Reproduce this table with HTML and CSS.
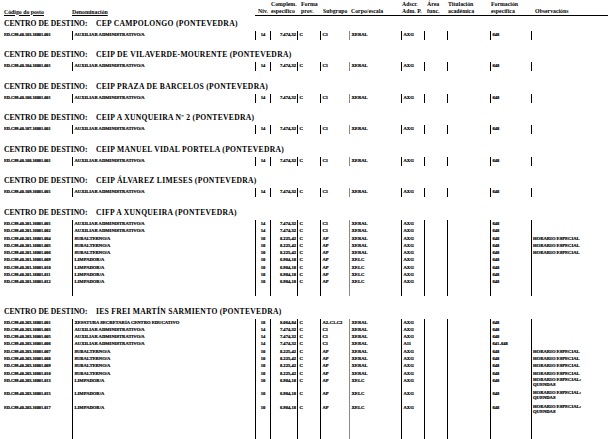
FILE: index.html
```html
<!DOCTYPE html>
<html lang="gl">
<head>
<meta charset="utf-8">
<title>Relación de postos</title>
<link rel="stylesheet" href="styles.css">
</head>
<body>
<div class="page">
  <div class="grid head">
    <div class="h"><span class="u">Código do posto</span></div>
    <div class="h"><span class="u">Denominación</span></div>
    <div class="h ln hc">Niv.</div>
    <div class="h ln p1">Complem.<br>específico</div>
    <div class="h ln p4">Forma<br>prov.</div>
    <div class="h ln p3">Subgrupo</div>
    <div class="h ln p2">Corpo/escala</div>
    <div class="h ln p1">Adscr.<br>Adm. P.</div>
    <div class="h ln p3">Área<br>func.</div>
    <div class="h ln p1">Titulación<br>académica</div>
    <div class="h ln p1">Formación<br>específica</div>
    <div class="h ln p4">Observacións</div>
  </div>

  <section class="sec">
    <div class="title"><span class="lab">CENTRO DE DESTINO:</span><span class="name">CEP CAMPOLONGO (PONTEVEDRA)</span></div>
    <div class="grid row"><div class="c code">ED.C99.40.103.16001.001</div><div class="c den">AUXILIAR ADMINISTRATIVO/A</div><div class="c niv">14</div><div class="c cmp">7.474,32</div><div class="c fp">C</div><div class="c sg">C1</div><div class="c ce">XERAL</div><div class="c ad">AXG</div><div class="c ar"></div><div class="c ti"></div><div class="c fo">648</div><div class="c ob"></div></div>
    <div class="grid row fill f1"><div class="c code"></div><div class="c den"></div><div class="c niv"></div><div class="c cmp"></div><div class="c fp"></div><div class="c sg"></div><div class="c ce"></div><div class="c ad"></div><div class="c ar"></div><div class="c ti"></div><div class="c fo"></div><div class="c ob"></div></div>
  </section>

  <section class="sec">
    <div class="title"><span class="lab">CENTRO DE DESTINO:</span><span class="name">CEIP DE VILAVERDE-MOURENTE (PONTEVEDRA)</span></div>
    <div class="grid row"><div class="c code">ED.C99.40.104.16001.001</div><div class="c den">AUXILIAR ADMINISTRATIVO/A</div><div class="c niv">14</div><div class="c cmp">7.474,32</div><div class="c fp">C</div><div class="c sg">C1</div><div class="c ce">XERAL</div><div class="c ad">AXG</div><div class="c ar"></div><div class="c ti"></div><div class="c fo">648</div><div class="c ob"></div></div>
    <div class="grid row fill f1"><div class="c code"></div><div class="c den"></div><div class="c niv"></div><div class="c cmp"></div><div class="c fp"></div><div class="c sg"></div><div class="c ce"></div><div class="c ad"></div><div class="c ar"></div><div class="c ti"></div><div class="c fo"></div><div class="c ob"></div></div>
  </section>

  <section class="sec">
    <div class="title"><span class="lab">CENTRO DE DESTINO:</span><span class="name">CEIP PRAZA DE BARCELOS (PONTEVEDRA)</span></div>
    <div class="grid row"><div class="c code">ED.C99.40.106.16001.001</div><div class="c den">AUXILIAR ADMINISTRATIVO/A</div><div class="c niv">14</div><div class="c cmp">7.474,32</div><div class="c fp">C</div><div class="c sg">C1</div><div class="c ce">XERAL</div><div class="c ad">AXG</div><div class="c ar"></div><div class="c ti"></div><div class="c fo">648</div><div class="c ob"></div></div>
    <div class="grid row fill f1"><div class="c code"></div><div class="c den"></div><div class="c niv"></div><div class="c cmp"></div><div class="c fp"></div><div class="c sg"></div><div class="c ce"></div><div class="c ad"></div><div class="c ar"></div><div class="c ti"></div><div class="c fo"></div><div class="c ob"></div></div>
  </section>

  <section class="sec">
    <div class="title"><span class="lab">CENTRO DE DESTINO:</span><span class="name">CEIP A XUNQUEIRA Nº 2 (PONTEVEDRA)</span></div>
    <div class="grid row"><div class="c code">ED.C99.40.107.16001.001</div><div class="c den">AUXILIAR ADMINISTRATIVO/A</div><div class="c niv">14</div><div class="c cmp">7.474,32</div><div class="c fp">C</div><div class="c sg">C1</div><div class="c ce">XERAL</div><div class="c ad">AXG</div><div class="c ar"></div><div class="c ti"></div><div class="c fo">648</div><div class="c ob"></div></div>
    <div class="grid row fill f1"><div class="c code"></div><div class="c den"></div><div class="c niv"></div><div class="c cmp"></div><div class="c fp"></div><div class="c sg"></div><div class="c ce"></div><div class="c ad"></div><div class="c ar"></div><div class="c ti"></div><div class="c fo"></div><div class="c ob"></div></div>
  </section>

  <section class="sec">
    <div class="title"><span class="lab">CENTRO DE DESTINO:</span><span class="name">CEIP MANUEL VIDAL PORTELA (PONTEVEDRA)</span></div>
    <div class="grid row"><div class="c code">ED.C99.40.108.16001.001</div><div class="c den">AUXILIAR ADMINISTRATIVO/A</div><div class="c niv">14</div><div class="c cmp">7.474,32</div><div class="c fp">C</div><div class="c sg">C1</div><div class="c ce">XERAL</div><div class="c ad">AXG</div><div class="c ar"></div><div class="c ti"></div><div class="c fo">648</div><div class="c ob"></div></div>
    <div class="grid row fill f1"><div class="c code"></div><div class="c den"></div><div class="c niv"></div><div class="c cmp"></div><div class="c fp"></div><div class="c sg"></div><div class="c ce"></div><div class="c ad"></div><div class="c ar"></div><div class="c ti"></div><div class="c fo"></div><div class="c ob"></div></div>
  </section>

  <section class="sec">
    <div class="title"><span class="lab">CENTRO DE DESTINO:</span><span class="name">CEIP ÁLVAREZ LIMESES (PONTEVEDRA)</span></div>
    <div class="grid row"><div class="c code">ED.C99.40.109.16001.001</div><div class="c den">AUXILIAR ADMINISTRATIVO/A</div><div class="c niv">14</div><div class="c cmp">7.474,32</div><div class="c fp">C</div><div class="c sg">C1</div><div class="c ce">XERAL</div><div class="c ad">AXG</div><div class="c ar"></div><div class="c ti"></div><div class="c fo">648</div><div class="c ob"></div></div>
    <div class="grid row fill f1"><div class="c code"></div><div class="c den"></div><div class="c niv"></div><div class="c cmp"></div><div class="c fp"></div><div class="c sg"></div><div class="c ce"></div><div class="c ad"></div><div class="c ar"></div><div class="c ti"></div><div class="c fo"></div><div class="c ob"></div></div>
  </section>

  <section class="sec">
    <div class="title"><span class="lab">CENTRO DE DESTINO:</span><span class="name">CIFP A XUNQUEIRA (PONTEVEDRA)</span></div>
    <div class="grid row"><div class="c code">ED.C99.40.201.16001.001</div><div class="c den">AUXILIAR ADMINISTRATIVO/A</div><div class="c niv">14</div><div class="c cmp">7.474,32</div><div class="c fp">C</div><div class="c sg">C1</div><div class="c ce">XERAL</div><div class="c ad">AXG</div><div class="c ar"></div><div class="c ti"></div><div class="c fo">648</div><div class="c ob"></div></div>
    <div class="grid row"><div class="c code">ED.C99.40.201.16001.002</div><div class="c den">AUXILIAR ADMINISTRATIVO/A</div><div class="c niv">14</div><div class="c cmp">7.474,32</div><div class="c fp">C</div><div class="c sg">C1</div><div class="c ce">XERAL</div><div class="c ad">AXG</div><div class="c ar"></div><div class="c ti"></div><div class="c fo">648</div><div class="c ob"></div></div>
    <div class="grid row"><div class="c code">ED.C99.40.201.16001.004</div><div class="c den">SUBALTERNO/A</div><div class="c niv">10</div><div class="c cmp">8.225,42</div><div class="c fp">C</div><div class="c sg">AP</div><div class="c ce">XERAL</div><div class="c ad">AXG</div><div class="c ar"></div><div class="c ti"></div><div class="c fo">648</div><div class="c ob t">HORARIO ESPECIAL</div></div>
    <div class="grid row"><div class="c code">ED.C99.40.201.16001.005</div><div class="c den">SUBALTERNO/A</div><div class="c niv">10</div><div class="c cmp">8.225,42</div><div class="c fp">C</div><div class="c sg">AP</div><div class="c ce">XERAL</div><div class="c ad">AXG</div><div class="c ar"></div><div class="c ti"></div><div class="c fo">648</div><div class="c ob t">HORARIO ESPECIAL</div></div>
    <div class="grid row"><div class="c code">ED.C99.40.201.16001.006</div><div class="c den">SUBALTERNO/A</div><div class="c niv">10</div><div class="c cmp">8.225,42</div><div class="c fp">C</div><div class="c sg">AP</div><div class="c ce">XERAL</div><div class="c ad">AXG</div><div class="c ar"></div><div class="c ti"></div><div class="c fo">648</div><div class="c ob t">HORARIO ESPECIAL</div></div>
    <div class="grid row"><div class="c code">ED.C99.40.201.16001.009</div><div class="c den">LIMPADOR/A</div><div class="c niv">10</div><div class="c cmp">6.984,18</div><div class="c fp">C</div><div class="c sg">AP</div><div class="c ce">XELC</div><div class="c ad">AXG</div><div class="c ar"></div><div class="c ti"></div><div class="c fo">648</div><div class="c ob"></div></div>
    <div class="grid row"><div class="c code">ED.C99.40.201.16001.010</div><div class="c den">LIMPADOR/A</div><div class="c niv">10</div><div class="c cmp">6.984,18</div><div class="c fp">C</div><div class="c sg">AP</div><div class="c ce">XELC</div><div class="c ad">AXG</div><div class="c ar"></div><div class="c ti"></div><div class="c fo">648</div><div class="c ob"></div></div>
    <div class="grid row"><div class="c code">ED.C99.40.201.16001.011</div><div class="c den">LIMPADOR/A</div><div class="c niv">10</div><div class="c cmp">6.984,18</div><div class="c fp">C</div><div class="c sg">AP</div><div class="c ce">XELC</div><div class="c ad">AXG</div><div class="c ar"></div><div class="c ti"></div><div class="c fo">648</div><div class="c ob"></div></div>
    <div class="grid row"><div class="c code">ED.C99.40.201.16001.012</div><div class="c den">LIMPADOR/A</div><div class="c niv">10</div><div class="c cmp">6.984,18</div><div class="c fp">C</div><div class="c sg">AP</div><div class="c ce">XELC</div><div class="c ad">AXG</div><div class="c ar"></div><div class="c ti"></div><div class="c fo">648</div><div class="c ob"></div></div>
    <div class="grid row fill f2"><div class="c code"></div><div class="c den"></div><div class="c niv"></div><div class="c cmp"></div><div class="c fp"></div><div class="c sg"></div><div class="c ce"></div><div class="c ad"></div><div class="c ar"></div><div class="c ti"></div><div class="c fo"></div><div class="c ob"></div></div>
  </section>

  <section class="sec">
    <div class="title"><span class="lab">CENTRO DE DESTINO:</span><span class="name">IES FREI MARTÍN SARMIENTO (PONTEVEDRA)</span></div>
    <div class="grid row"><div class="c code">ED.C99.40.203.16001.001</div><div class="c den">XEFATURA SECRETARÍA CENTRO EDUCATIVO</div><div class="c niv">18</div><div class="c cmp">8.064,84</div><div class="c fp">C</div><div class="c sg">A2-C1-C2</div><div class="c ce">XERAL</div><div class="c ad">AXG</div><div class="c ar"></div><div class="c ti"></div><div class="c fo">648</div><div class="c ob"></div></div>
    <div class="grid row"><div class="c code">ED.C99.40.203.16001.003</div><div class="c den">AUXILIAR ADMINISTRATIVO/A</div><div class="c niv">14</div><div class="c cmp">7.474,32</div><div class="c fp">C</div><div class="c sg">C1</div><div class="c ce">XERAL</div><div class="c ad">AXG</div><div class="c ar"></div><div class="c ti"></div><div class="c fo">648</div><div class="c ob"></div></div>
    <div class="grid row"><div class="c code">ED.C99.40.203.16001.005</div><div class="c den">AUXILIAR ADMINISTRATIVO/A</div><div class="c niv">14</div><div class="c cmp">7.474,32</div><div class="c fp">C</div><div class="c sg">C1</div><div class="c ce">XERAL</div><div class="c ad">AXG</div><div class="c ar"></div><div class="c ti"></div><div class="c fo">648</div><div class="c ob"></div></div>
    <div class="grid row"><div class="c code">ED.C99.40.203.16001.006</div><div class="c den">AUXILIAR ADMINISTRATIVO/A</div><div class="c niv">14</div><div class="c cmp">7.474,32</div><div class="c fp">C</div><div class="c sg">C1</div><div class="c ce">XERAL</div><div class="c ad">A11</div><div class="c ar"></div><div class="c ti"></div><div class="c fo">641-648</div><div class="c ob"></div></div>
    <div class="grid row"><div class="c code">ED.C99.40.203.16001.007</div><div class="c den">SUBALTERNO/A</div><div class="c niv">10</div><div class="c cmp">8.225,42</div><div class="c fp">C</div><div class="c sg">AP</div><div class="c ce">XERAL</div><div class="c ad">AXG</div><div class="c ar"></div><div class="c ti"></div><div class="c fo">648</div><div class="c ob t">HORARIO ESPECIAL</div></div>
    <div class="grid row"><div class="c code">ED.C99.40.203.16001.008</div><div class="c den">SUBALTERNO/A</div><div class="c niv">10</div><div class="c cmp">8.225,42</div><div class="c fp">C</div><div class="c sg">AP</div><div class="c ce">XERAL</div><div class="c ad">AXG</div><div class="c ar"></div><div class="c ti"></div><div class="c fo">648</div><div class="c ob t">HORARIO ESPECIAL</div></div>
    <div class="grid row"><div class="c code">ED.C99.40.203.16001.009</div><div class="c den">SUBALTERNO/A</div><div class="c niv">10</div><div class="c cmp">8.225,42</div><div class="c fp">C</div><div class="c sg">AP</div><div class="c ce">XERAL</div><div class="c ad">AXG</div><div class="c ar"></div><div class="c ti"></div><div class="c fo">648</div><div class="c ob t">HORARIO ESPECIAL</div></div>
    <div class="grid row"><div class="c code">ED.C99.40.203.16001.010</div><div class="c den">SUBALTERNO/A</div><div class="c niv">10</div><div class="c cmp">8.225,42</div><div class="c fp">C</div><div class="c sg">AP</div><div class="c ce">XERAL</div><div class="c ad">AXG</div><div class="c ar"></div><div class="c ti"></div><div class="c fo">648</div><div class="c ob t">HORARIO ESPECIAL</div></div>
    <div class="grid row two"><div class="c code">ED.C99.40.203.16001.013</div><div class="c den">LIMPADOR/A</div><div class="c niv">10</div><div class="c cmp">6.984,18</div><div class="c fp">C</div><div class="c sg">AP</div><div class="c ce">XELC</div><div class="c ad">AXG</div><div class="c ar"></div><div class="c ti"></div><div class="c fo">648</div><div class="c ob t">HORARIO ESPECIAL:<br>QUENDAS</div></div>
    <div class="grid row two"><div class="c code">ED.C99.40.203.16001.015</div><div class="c den">LIMPADOR/A</div><div class="c niv">10</div><div class="c cmp">6.984,18</div><div class="c fp">C</div><div class="c sg">AP</div><div class="c ce">XELC</div><div class="c ad">AXG</div><div class="c ar"></div><div class="c ti"></div><div class="c fo">648</div><div class="c ob t">HORARIO ESPECIAL:<br>QUENDAS</div></div>
    <div class="grid row two"><div class="c code">ED.C99.40.203.16001.017</div><div class="c den">LIMPADOR/A</div><div class="c niv">10</div><div class="c cmp">6.984,18</div><div class="c fp">C</div><div class="c sg">AP</div><div class="c ce">XELC</div><div class="c ad">AXG</div><div class="c ar"></div><div class="c ti"></div><div class="c fo">648</div><div class="c ob t">HORARIO ESPECIAL:<br>QUENDAS</div></div>
    <div class="grid row fill f3"><div class="c code"></div><div class="c den"></div><div class="c niv"></div><div class="c cmp"></div><div class="c fp"></div><div class="c sg"></div><div class="c ce"></div><div class="c ad"></div><div class="c ar"></div><div class="c ti"></div><div class="c fo"></div><div class="c ob"></div></div>
  </section>
</div>
</body>
</html>
```

FILE: styles.css
```css
html, body {
  margin: 0;
  padding: 0;
  background: #ffffff;
}

body {
  width: 616px;
  height: 439px;
  overflow: hidden;
  font-family: "Liberation Serif", "Times New Roman", serif;
  font-weight: bold;
  color: #000000;
}

.page {
  padding-left: 4px;
}

.grid {
  display: grid;
  grid-template-columns: 68px 183px 15px 27px 23px 29px 52px 23px 23px 43px 41px 77px;
}

/* header */
.head {
  height: 16px;
  align-items: end;
  margin-bottom: 3px;
  font-size: 5.8px;
  line-height: 6.5px;
}

.h {
  white-space: nowrap;
  padding-bottom: 1px;
}

.h .u {
  text-decoration: underline;
  text-decoration-thickness: 0.8px;
  text-underline-offset: 0.8px;
}

.h.ln {
  border-bottom: 1px solid #000000;
}

.h.hc { text-align: center; padding-left: 1px; }
.h.p1 { padding-left: 1px; }
.h.p2 { padding-left: 2px; }
.h.p3 { padding-left: 3px; }
.h.p4 { padding-left: 4px; }

/* sections */
.sec {
  margin-bottom: 10.5px;
}

.title {
  height: 10px;
  line-height: 10px;
  font-size: 7.6px;
  white-space: nowrap;
  margin-bottom: 2px;
}

.title .lab {
  margin-right: 8.4px;
}

.title .name {
  letter-spacing: 0.3px;
}

/* data rows */
.row {
  height: 7.3px;
  font-size: 4.6px;
  line-height: 7.3px;
  -webkit-text-stroke: 0.2px #000000;
}

.row.two {
  height: 13.3px;
}

.c {
  border-left: 1px solid #000000;
  padding-left: 1.5px;
  white-space: nowrap;
  overflow: hidden;
}

.c.code {
  border-left: none;
  padding-left: 0;
  font-size: 4.3px;
}

.c.niv {
  text-align: center;
  padding-left: 0;
}

.c.cmp {
  text-align: right;
  padding-right: 1px;
  padding-left: 0;
}

.c.ce {
  border-left: 1.5px solid #8a8a8a;
}

.c.ob {
  border-left: 1.6px solid #000000;
}

.c.ob.t {
  border-left: 1px solid #000000;
  padding-left: 1px;
}

.row.two .c.ob.t {
  white-space: normal;
  line-height: 4.9px;
  padding-top: 1.2px;
}

.fill.f1 { height: 1.7px; }
.fill.f2 { height: 10.5px; }
.fill.f3 { height: 30px; }
```
